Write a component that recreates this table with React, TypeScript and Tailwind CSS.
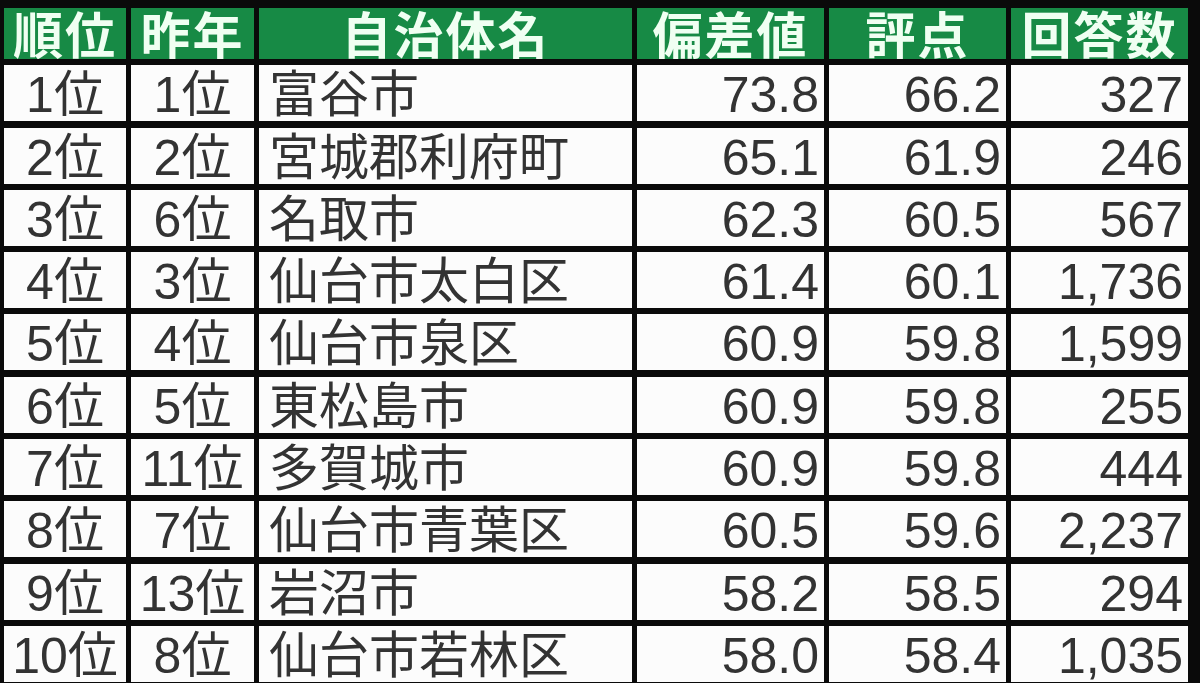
import React from "react";

const rows = [
  ["1位", "1位", "富谷市", "73.8", "66.2", "327"],
  ["2位", "2位", "宮城郡利府町", "65.1", "61.9", "246"],
  ["3位", "6位", "名取市", "62.3", "60.5", "567"],
  ["4位", "3位", "仙台市太白区", "61.4", "60.1", "1,736"],
  ["5位", "4位", "仙台市泉区", "60.9", "59.8", "1,599"],
  ["6位", "5位", "東松島市", "60.9", "59.8", "255"],
  ["7位", "11位", "多賀城市", "60.9", "59.8", "444"],
  ["8位", "7位", "仙台市青葉区", "60.5", "59.6", "2,237"],
  ["9位", "13位", "岩沼市", "58.2", "58.5", "294"],
  ["10位", "8位", "仙台市若林区", "58.0", "58.4", "1,035"],
];

const headers = ["順位", "昨年", "自治体名", "偏差値", "評点", "回答数"];

const font = {
  fontFamily: '"Liberation Sans", "Noto Sans CJK JP", sans-serif',
};

export default function App() {
  return (
    <div className="w-[1200px] h-[683px] overflow-hidden bg-[#0a0a0a] pt-[8px] pl-[4px]" style={font}>
      <div className="grid grid-cols-[122px_123px_373px_187px_177px_177px] gap-x-[5px] gap-y-[6.3px] grid-rows-[51px_repeat(10,56px)]">
        {headers.map((h) => (
          <div
            key={h}
            className="bg-[#178a45] text-[#f0fff2] font-bold text-[50px] leading-[50px] pt-[4px] text-center overflow-hidden tracking-[2px]"
          >
            {h}
          </div>
        ))}
        {rows.map((r, ri) =>
          r.map((c, ci) => (
            <div
              key={ri + "-" + ci}
              className={
                "bg-[#fcfcfc] text-[#333333] text-[50px] leading-[60px] whitespace-nowrap " +
                (ci < 2 ? "text-center" : ci === 2 ? "text-left pl-[10px]" : "text-right pr-[5px]")
              }
            >
              <span className="inline-block h-[56px]">{c}</span>
            </div>
          ))
        )}
      </div>
    </div>
  );
}
